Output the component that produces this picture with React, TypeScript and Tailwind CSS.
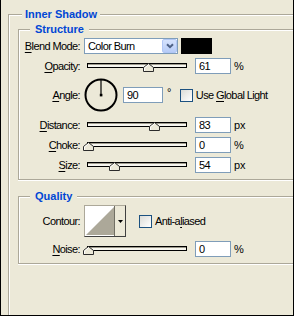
import React from "react";

const txt = "font-['Liberation_Sans',Arial,sans-serif] text-[11px] tracking-[-0.6px] text-black leading-none";
const title = "font-['Liberation_Sans',Arial,sans-serif] text-[11px] font-bold text-[#0046D5] leading-none";

function M({ children }: { children: React.ReactNode }) {
  return <span className="underline decoration-1 underline-offset-[2px]">{children}</span>;
}

function Label({ children }: { children: React.ReactNode }) {
  return <div className={`w-[61px] shrink-0 text-right ${txt}`}>{children}</div>;
}

function InputBox({ value, w = 36 }: { value: string; w?: number }) {
  return (
    <div
      className={`${w === 36 ? "w-[36px]" : "w-[40px]"} h-[16px] shrink-0 border border-[#7F9DB9] bg-white pl-[3px] flex items-center ${txt}`}
    >
      {value}
    </div>
  );
}

function Thumb() {
  return (
    <svg width="11" height="9" viewBox="0 0 11 9">
      <polygon points="5.5,0.5 10.5,4.5 10.5,8.5 0.5,8.5 0.5,4.5" fill="#ECE9D8" stroke="#2b2b2b" strokeWidth="1" />
      <polyline points="1.5,8 1.5,5 5.5,1.8" fill="none" stroke="#ffffff" strokeWidth="1" />
    </svg>
  );
}

function SliderRow({ label, value, pos, unit }: { label: React.ReactNode; value: string; pos: number; unit: string }) {
  return (
    <div className="flex items-center h-[16px]">
      <Label>{label}</Label>
      <div className="relative ml-[7px] w-[100px] h-[16px] shrink-0">
        <div className="absolute left-0 right-0 top-[5px] h-[5px] border border-black bg-[#F7F6EF] shadow-[inset_0_1px_0_#9d9a8c]" />
        <div className="absolute top-[5px] leading-none" style={{ left: pos - 5.5 }}>
          <Thumb />
        </div>
      </div>
      <div className="ml-[8px]">
        <InputBox value={value} />
      </div>
      <div className={`ml-[3px] ${txt} tracking-normal`}>{unit}</div>
    </div>
  );
}

function Checkbox() {
  return (
    <div className="w-[13px] h-[13px] shrink-0 border border-[#1C5180] bg-[linear-gradient(135deg,#DCDCD7,#FFFFFF)]" />
  );
}

export default function App() {
  return (
    <div className="w-[294px] h-[316px] border-l border-r border-b border-black bg-[#ECE9D8] pt-[14px] pl-[7px] flex flex-col">
      <div className="relative flex-1 border-t border-l border-[#ACA899] shadow-[inset_1px_1px_0_#FFFFFF] pl-[9px] pt-[14px]">
        <div className={`absolute -top-[6px] left-[13px] px-[3px] bg-[#ECE9D8] ${title}`}>Inner Shadow</div>

        {/* Structure */}
        <div className="relative h-[151px] border-t border-l border-b border-[#ACA899] shadow-[inset_1px_1px_0_#FFFFFF,0_1px_0_#FFFFFF] pt-[8px] flex flex-col">
          <div className={`absolute -top-[6px] left-[11px] px-[5px] bg-[#ECE9D8] ${title}`}>Structure</div>

          {/* Blend mode */}
          <div className="flex items-center h-[16px]">
            <Label>
              <M>B</M>lend Mode:
            </Label>
            <div className="ml-[4px] w-[94px] h-[16px] border border-[#7F9DB9] bg-white flex items-center justify-between">
              <span className={`pl-[3px] ${txt}`}>Color Burn</span>
              <div className="w-[15px] h-[14px] rounded-[2px] border border-[#B1C7F5] bg-[linear-gradient(180deg,#D6E3FD,#B7CCF7)] flex items-center justify-center">
                <svg width="8" height="6" viewBox="0 0 8 6">
                  <path d="M1 1.2 L4 4.2 L7 1.2" fill="none" stroke="#4D6185" strokeWidth="2" />
                </svg>
              </div>
            </div>
            <div className="ml-[3px] w-[31px] h-[16px] bg-black" />
          </div>

          <div className="mt-[4px]">
            <SliderRow label={<><M>O</M>pacity:</>} value="61" pos={61} unit="%" />
          </div>

          {/* Angle */}
          <div className="mt-[4px] flex items-center h-[34px]">
            <Label>
              <M>A</M>ngle:
            </Label>
            <div className="ml-[4px] shrink-0">
              <svg width="34" height="34" viewBox="0 0 34 34" className="block">
                <circle cx="17" cy="17" r="15.5" fill="none" stroke="#000" strokeWidth="2" />
                <line x1="17" y1="1.5" x2="17" y2="17" stroke="#000" strokeWidth="1.2" />
                <rect x="15.8" y="15.8" width="2.6" height="2.6" fill="#000" />
              </svg>
            </div>
            <div className="ml-[5px]">
              <InputBox value="90" w={40} />
            </div>
            <div className={`ml-[4px] self-start mt-[9px] ${txt}`}>°</div>
            <div className="ml-[9px]">
              <Checkbox />
            </div>
            <div className={`ml-[3px] ${txt}`}>
              Use <M>G</M>lobal Light
            </div>
          </div>

          <div className="mt-[5px]">
            <SliderRow label={<><M>D</M>istance:</>} value="83" pos={67} unit="px" />
          </div>
          <div className="mt-[4px]">
            <SliderRow label={<><M>C</M>hoke:</>} value="0" pos={1} unit="%" />
          </div>
          <div className="mt-[4px]">
            <SliderRow label={<><M>S</M>ize:</>} value="54" pos={27} unit="px" />
          </div>
        </div>

        {/* Quality */}
        <div className="relative mt-[16px] h-[68px] border-t border-l border-b border-[#ACA899] shadow-[inset_1px_1px_0_#FFFFFF,0_1px_0_#FFFFFF] pt-[8px] flex flex-col">
          <div className={`absolute -top-[6px] left-[11px] px-[5px] bg-[#ECE9D8] ${title}`}>Quality</div>

          <div className="flex items-center h-[32px]">
            <Label>Contour:</Label>
            <div className="ml-[4px] w-[42px] h-[32px] shrink-0 border border-t-[#ACA899] border-l-[#ACA899] border-r-[#404040] border-b-[#404040] bg-white flex">
              <div className="w-[30px] h-full p-[1px] border-r border-[#716F64]">
                <svg width="28" height="28" viewBox="0 0 28 28" className="block">
                  <polygon points="28,0 28,28 0,28" fill="#ACA899" />
                </svg>
              </div>
              <div className="flex-1 bg-[#ECE9D8] flex items-center justify-center">
                <svg width="5" height="3" viewBox="0 0 5 3">
                  <polygon points="0,0 5,0 2.5,3" fill="#000" />
                </svg>
              </div>
            </div>
            <div className="ml-[13px]">
              <Checkbox />
            </div>
            <div className={`ml-[3px] ${txt}`}>
              Anti-a<M>l</M>iased
            </div>
          </div>

          <div className="mt-[4px]">
            <SliderRow label={<><M>N</M>oise:</>} value="0" pos={1} unit="%" />
          </div>
        </div>
      </div>
    </div>
  );
}
